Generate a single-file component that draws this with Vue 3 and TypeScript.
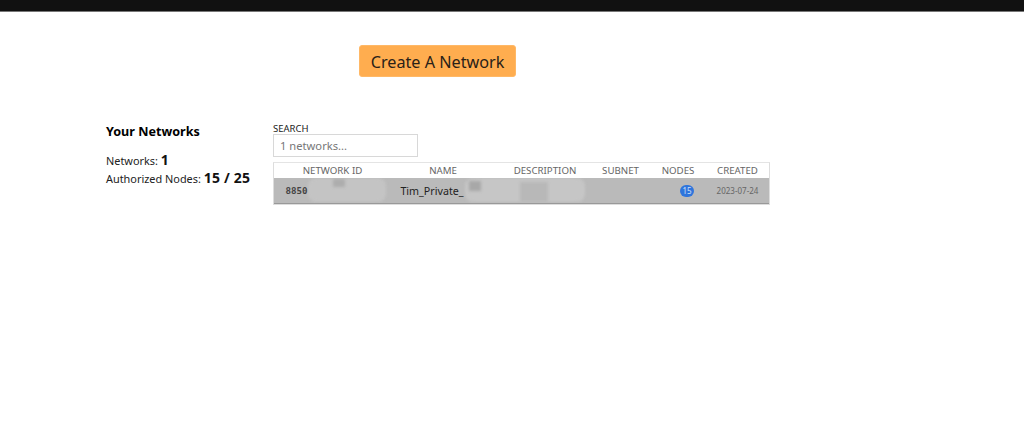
<script setup lang="ts">
interface Col { label: string; width: number }
const columns: Col[] = [
  { label: 'NETWORK ID', width: 117 },
  { label: 'NAME', width: 104 },
  { label: 'DESCRIPTION', width: 100 },
  { label: 'SUBNET', width: 51 },
  { label: 'NODES', width: 64 },
  { label: 'CREATED', width: 55 },
]
</script>

<template>
  <div class="page">
    <div class="topbar"></div>
    <div class="action">
      <button class="create">Create A Network</button>
    </div>
    <div class="content">
      <aside class="side">
        <h2>Your Networks</h2>
        <div class="stat first">Networks: <b>1</b></div>
        <div class="stat">Authorized Nodes: <b>15 / 25</b></div>
      </aside>
      <section class="main">
        <label class="search-label">SEARCH</label>
        <div class="search">1 networks...</div>
        <div class="table">
          <div class="thead">
            <span v-for="c in columns" :key="c.label" :style="{ width: c.width + 'px' }">{{ c.label }}</span>
          </div>
          <div class="row">
            <div class="smudge s1"></div>
            <div class="smudge s1b"></div>
            <div class="smudge s2"></div>
            <div class="smudge s2b"></div>
            <div class="smudge s3"></div>
            <span class="id" :style="{ width: columns[0].width + 'px' }">8850</span>
            <span class="name" :style="{ width: columns[1].width + 'px' }">Tim_Private_</span>
            <span :style="{ width: columns[2].width + 'px' }"></span>
            <span :style="{ width: columns[3].width + 'px' }"></span>
            <span class="nodes" :style="{ width: columns[4].width + 'px' }"><i class="badge">15</i></span>
            <span class="date" :style="{ width: columns[5].width + 'px' }">2023-07-24</span>
          </div>
        </div>
      </section>
    </div>
  </div>
</template>

<style>
html, body { margin: 0; background: #fff; overflow: hidden; }
</style>

<style scoped>
.page { height: 424px; background: #fff; color: #111; font-family: "Noto Sans", "Open Sans", sans-serif; }
.topbar { height: 12px; background: #111; border-bottom: 1px solid #777; box-sizing: border-box; }
.action { padding: 33px 0 0 359px; }
.create {
  display: block; width: 157px; height: 32px; padding: 2px 0 0; border: 1px solid #ffb866; border-radius: 3px;
  background: #ffad4f; color: #2a2118; font: 16.2px "Noto Sans", sans-serif; text-align: center;
}
.content { display: flex; padding: 45px 0 0 106px; }
.side { width: 167px; }
h2 { margin: 0; padding-top: 1px; font-size: 12.6px; line-height: 18px; font-weight: 700; color: #000; }
.stat { font-size: 10.9px; line-height: 17px; color: #222; white-space: nowrap; }
.stat.first { margin-top: 10px; }
.stat b { font-size: 14px; font-weight: 700; color: #111; letter-spacing: 0.2px; }
.main { width: 497px; }
.search-label { display: block; font-size: 9.5px; line-height: 11px; padding-top: 1px; color: #222; }
.search {
  box-sizing: border-box; width: 145px; height: 23px; padding-left: 6px;
  border: 1px solid #d8d8d8; font-size: 11.2px; line-height: 21px; color: #777;
}
.table { margin-top: 5px; border: 1px solid #ddd; border-top-color: #e4e4e4; box-sizing: border-box; }
.thead { display: flex; height: 15px; align-items: center; }
.thead span { font-size: 9.7px; color: #666; text-align: center; flex: none; white-space: nowrap; }
.row {
  position: relative; display: flex; align-items: center; height: 25px; background: #bababa;
  border-bottom: 1px solid #999; overflow: hidden;
}
.row span { flex: none; text-align: center; white-space: nowrap; position: relative; }
.id { font-family: "DejaVu Sans Mono", monospace; font-size: 9.2px; font-weight: 700; color: #444; box-sizing: border-box; padding-right: 72px; }
.name { font-size: 10.7px; color: #222; box-sizing: border-box; padding-right: 22px; }
.nodes { box-sizing: border-box; padding-left: 18px; display: flex; justify-content: center; }
.badge {
  display: block; width: 14px; height: 12px; border-radius: 7px; background: #2f75dc; color: #cfe0f8;
  font: normal 8px/12px "Noto Sans", sans-serif; text-align: center;
}
.date { font-size: 8px; color: #666; }
.smudge { position: absolute; filter: blur(1.5px); background: #c2c2c2; border-radius: 8px; }
.s1 { left: 34px; top: 0; width: 78px; height: 24px; background: #c4c4c4; }
.s1b { left: 59px; top: 1px; width: 12px; height: 8px; background: #adadad; border-radius: 0; }
.s2 { left: 191px; top: 0; width: 120px; height: 24px; background: #c6c6c6; }
.s2b { left: 195px; top: 3px; width: 12px; height: 10px; background: #a8a8a8; border-radius: 0; }
.s3 { left: 246px; top: 4px; width: 28px; height: 20px; background: #b8b8b8; border-radius: 0; }
</style>
